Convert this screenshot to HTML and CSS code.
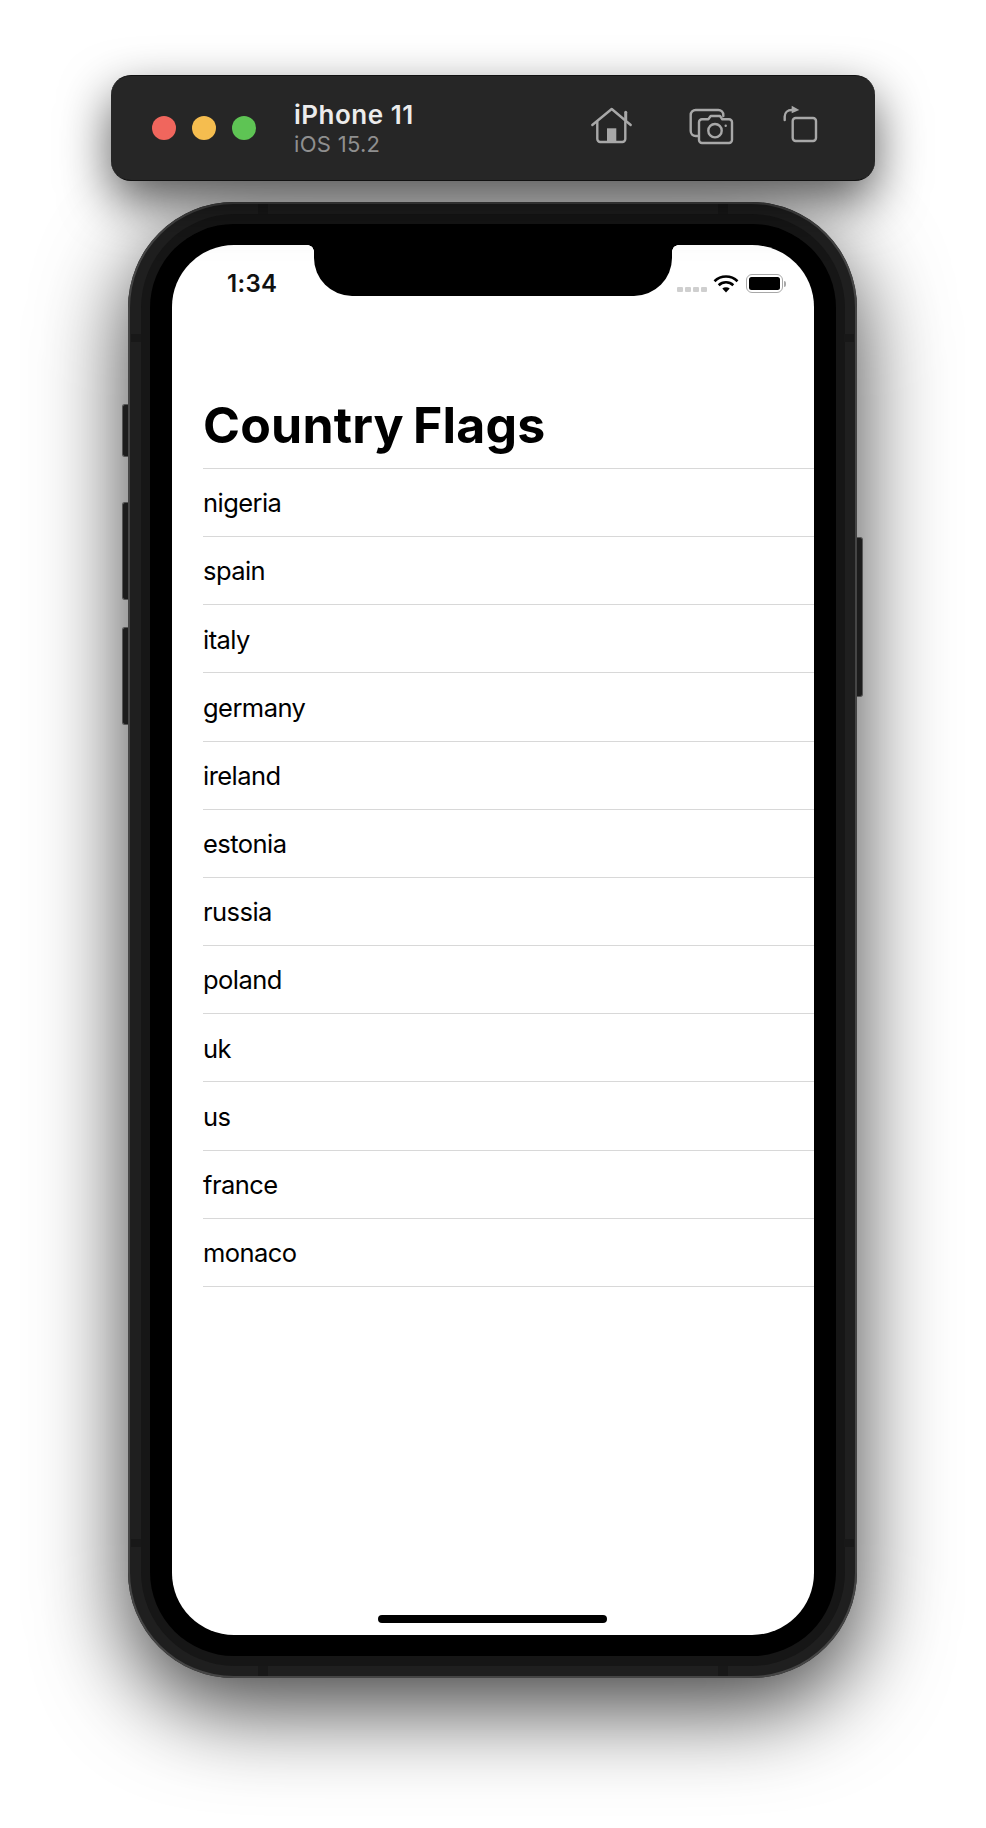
FILE: index.html
```html
<!DOCTYPE html>
<html lang="en">
<head>
    <meta charset="UTF-8">
    <meta name="viewport" content="width=device-width, initial-scale=1.0">
    <title>Country Flags</title>
    <link rel="stylesheet" href="styles.css">
</head>
<body>
    <div class="stage">
        <!-- simulator toolbar -->
        <div class="toolbar">
            <div class="lights">
                <span class="light red"></span>
                <span class="light yellow"></span>
                <span class="light green"></span>
            </div>
            <div class="device">
                <div class="device-name">iPhone 11</div>
                <div class="device-os">iOS 15.2</div>
            </div>
            <div class="tools">
                <svg class="tool tool-home" width="44" height="40" viewBox="0 0 44 40" fill="none" stroke="#a8a8a8" stroke-width="2.4" stroke-linecap="round" stroke-linejoin="round">
                    <path d="M2.3 19 21.7 3l19 16"/>
                    <path d="M35.700 6.300V14" stroke-width="3"/>
                    <path d="M7.300 15.700V33a3 3 0 0 0 3 3h22a3 3 0 0 0 3-3V15.700"/>
                    <path d="M17 22.300h9.300V36H17z" fill="#a8a8a8" stroke="none"/>
                </svg>
                <svg class="tool tool-shot" width="46" height="40" viewBox="0 0 46 40" fill="none" stroke="#a8a8a8" stroke-width="2.4" stroke-linecap="round" stroke-linejoin="round">
                    <path d="M10.300 30H7.700a5 5 0 0 1-5-5V9a5 5 0 0 1 5-5h22.600a5 5 0 0 1 5 5v1"/>
                    <path d="M14 13.300h6.300L22.700 10H32l2.300 3.300H41a3 3 0 0 1 3 3V34a3 3 0 0 1-3 3H14a3 3 0 0 1-3-3V16.300a3 3 0 0 1 3-3z"/>
                    <circle cx="27" cy="24.700" r="6.700"/>
                    <circle cx="37.700" cy="19.700" r="1.200" fill="#a8a8a8" stroke="none"/>
                </svg>
                <svg class="tool tool-rotate" width="40" height="50" viewBox="0 0 40 50" fill="none" stroke="#a8a8a8" stroke-width="2.4" stroke-linecap="round" stroke-linejoin="round">
                    <rect x="12.700" y="18" width="23.300" height="23" rx="3"/>
                    <path d="M4.700 20v-3.500c0-3.800 3-6.500 7-6.500"/>
                    <path d="M11.700 5.700 19.300 10l-7.600 3.300z" fill="#a8a8a8" stroke="none"/>
                </svg>
            </div>
        </div>

        <!-- phone body: each wrapper is one ring of the bezel -->
        <div class="phone">
            <span class="side-btn btn-mute"></span>
            <span class="side-btn btn-up"></span>
            <span class="side-btn btn-down"></span>
            <span class="side-btn btn-power"></span>
            <span class="band band-tl"></span>
            <span class="band band-tr"></span>
            <span class="band band-bl"></span>
            <span class="band band-br"></span>
            <span class="band band-lt"></span>
            <span class="band band-lb"></span>
            <span class="band band-rt"></span>
            <span class="band band-rb"></span>
            <div class="ring">
                <div class="glass">
                    <div class="screen">
                        <div class="notch"></div>
                        <div class="statusbar">
                            <span class="clock">1:34</span>
                            <div class="status-icons">
                                <div class="signal"><i></i><i></i><i></i><i></i></div>
                                <svg class="wifi" width="26" height="19" viewBox="0 0 26 19" fill="none" stroke="#000" stroke-width="2.600">
                                    <path d="M1.500 7.200a16.500 16.500 0 0 1 23 0"/>
                                    <path d="M5.700 11.200a10.500 10.500 0 0 1 14.600 0"/>
                                    <path d="M13 18.500 9.300 14.600a5.400 5.400 0 0 1 7.400 0z" fill="#000" stroke="none"/>
                                </svg>
                                <div class="battery"><div class="battery-level"></div></div>
                                <span class="battery-cap"></span>
                            </div>
                        </div>
                        <h1 class="title">Country Flags</h1>
                        <ul class="list">
                            <li>nigeria</li>
                            <li>spain</li>
                            <li>italy</li>
                            <li>germany</li>
                            <li>ireland</li>
                            <li>estonia</li>
                            <li>russia</li>
                            <li>poland</li>
                            <li>uk</li>
                            <li>us</li>
                            <li>france</li>
                            <li>monaco</li>
                        </ul>
                        <div class="home-bar"></div>
                    </div>
                </div>
            </div>
        </div>
    </div>
</body>
</html>
```

FILE: styles.css
```css
html, body {
    margin: 0;
    padding: 0;
    background-color: #ffffff;
}

body {
    font-family: Inter, "Liberation Sans", sans-serif;
    overflow: hidden;
}

.stage {
    width: 986px;
    height: 1828px;
    padding: 75px 0 0 111px;
    box-sizing: border-box;
}

/* toolbar */
.toolbar {
    position: relative;
    z-index: 1;
    width: 764px;
    height: 106px;
    box-sizing: border-box;
    display: flex;
    align-items: center;
    padding: 0 55px 0 41px;
    background-color: #262626;
    border-radius: 20px;
    border-top: 1px solid #111111;
    border-bottom: 1px solid #111111;
    box-shadow: 0 20px 50px rgba(0, 0, 0, 0.65);
}

.lights {
    display: flex;
    gap: 16px;
}

.light {
    width: 24px;
    height: 24px;
    border-radius: 50%;
}

.red { background-color: #f0665d; }
.yellow { background-color: #f5bd4f; }
.green { background-color: #5ec454; }

.device {
    margin: 2px 0 0 38px;
}

.device-name {
    color: #ececec;
    font-size: 26px;
    line-height: 30px;
    font-weight: 600;
    letter-spacing: 0.5px;
}

.device-os {
    margin-top: 1px;
    color: #8f8f8f;
    font-size: 22px;
    line-height: 27px;
    letter-spacing: 0.3px;
}

.tools {
    display: flex;
    align-items: center;
    margin: -4px 0 0 auto;
}

.tool-shot { margin-left: 54px; }
.tool-rotate { margin-left: 46px; margin-top: -2px; }

/* phone */
.phone {
    position: relative;
    width: 729px;
    height: 1476px;
    box-sizing: border-box;
    margin: 21px 0 0 17px;
    padding: 12px 12px 12px 13px;
    background-color: #1f1f1f;
    border-radius: 106px;
    box-shadow: inset 0 0 0 2px #454545, 0 30px 90px rgba(0, 0, 0, 0.75);
}

.ring {
    height: 100%;
    box-sizing: border-box;
    padding: 10px 9px;
    background-color: #161616;
    border-radius: 94px;
}

.glass {
    height: 100%;
    box-sizing: border-box;
    padding: 21px 22px;
    background-color: #000000;
    border-radius: 84px;
}

.screen {
    position: relative;
    height: 100%;
    display: flex;
    flex-direction: column;
    background-color: #ffffff;
    border-radius: 62px;
    overflow: hidden;
}

.side-btn {
    position: absolute;
    width: 6px;
    background-color: #1c1c1c;
    border: 1px solid #555555;
    box-sizing: border-box;
}

.btn-mute, .btn-up, .btn-down {
    left: -6px;
    border-right: 0;
    border-radius: 3px 0 0 3px;
}

.btn-mute { top: 202px; height: 53px; }
.btn-up { top: 300px; height: 98px; }
.btn-down { top: 425px; height: 98px; }

.btn-power {
    right: -6px;
    top: 335px;
    height: 160px;
    border-left: 0;
    border-radius: 0 3px 3px 0;
}

.band {
    position: absolute;
    background-color: #181818;
}

.band-tl, .band-tr, .band-bl, .band-br {
    width: 10px;
    height: 10px;
}

.band-tl { left: 130px; top: 2px; }
.band-tr { right: 129px; top: 2px; }
.band-bl { left: 130px; bottom: 2px; }
.band-br { right: 129px; bottom: 2px; }

.band-lt, .band-lb, .band-rt, .band-rb {
    width: 10px;
    height: 8px;
}

.band-lt { left: 3px; top: 132px; }
.band-lb { left: 3px; bottom: 131px; }
.band-rt { right: 3px; top: 132px; }
.band-rb { right: 3px; bottom: 131px; }

.notch {
    position: absolute;
    left: 142px;
    top: 0;
    width: 358px;
    height: 51px;
    background-color: #000000;
    border-radius: 0 0 38px 38px;
}

/* small concave corners where the notch meets the top of the screen */
.notch::before, .notch::after {
    content: "";
    position: absolute;
    top: 0;
    width: 6px;
    height: 6px;
}

.notch::before {
    left: -6px;
    background: radial-gradient(circle at 0 100%, transparent 5.500px, #000000 6px);
}

.notch::after {
    right: -6px;
    background: radial-gradient(circle at 100% 100%, transparent 5.500px, #000000 6px);
}

.statusbar {
    height: 60px;
    box-sizing: border-box;
    padding: 25px 28px 0 55px;
    display: flex;
    justify-content: space-between;
    align-items: flex-start;
}

.clock {
    font-size: 24px;
    line-height: 28px;
    font-weight: 600;
    letter-spacing: 0.3px;
    color: #111111;
}

.status-icons {
    display: flex;
    align-items: flex-end;
    margin-top: 4px;
}

.signal {
    display: flex;
    gap: 2px;
    margin-bottom: 1px;
}

.signal i {
    width: 6px;
    height: 5px;
    background-color: #cfcfcf;
    border-radius: 1px;
}

.wifi {
    margin-left: 6px;
}

.battery {
    width: 37px;
    height: 19px;
    margin-left: 7px;
    box-sizing: border-box;
    padding: 2px;
    border: 1.500px solid #a8a8a8;
    border-radius: 6px;
}

.battery-level {
    height: 100%;
    background-color: #000000;
    border-radius: 2.500px;
}

.battery-cap {
    width: 2px;
    height: 6px;
    margin: 0 0 6px 1px;
    background-color: #a8a8a8;
    border-radius: 0 2px 2px 0;
}

.title {
    margin: 0;
    padding: 90px 0 13px 31px;
    font-size: 50px;
    line-height: 60px;
    font-weight: 700;
    letter-spacing: 0.2px;
    word-spacing: -3px;
    color: #000000;
}

.list {
    margin: 0 0 0 31px;
    padding: 0;
    list-style: none;
    border-top: 1.500px solid #d8d8d8;
}

.list li {
    height: 68.170px;
    box-sizing: border-box;
    padding-top: 0.500px;
    display: flex;
    align-items: center;
    font-size: 25.500px;
    letter-spacing: -0.55px;
    color: #000000;
    border-bottom: 1.500px solid #d8d8d8;
}

.home-bar {
    width: 229px;
    height: 8px;
    flex-shrink: 0;
    margin: auto 0 12px 206px;
    background-color: #000000;
    border-radius: 4px;
}
```
